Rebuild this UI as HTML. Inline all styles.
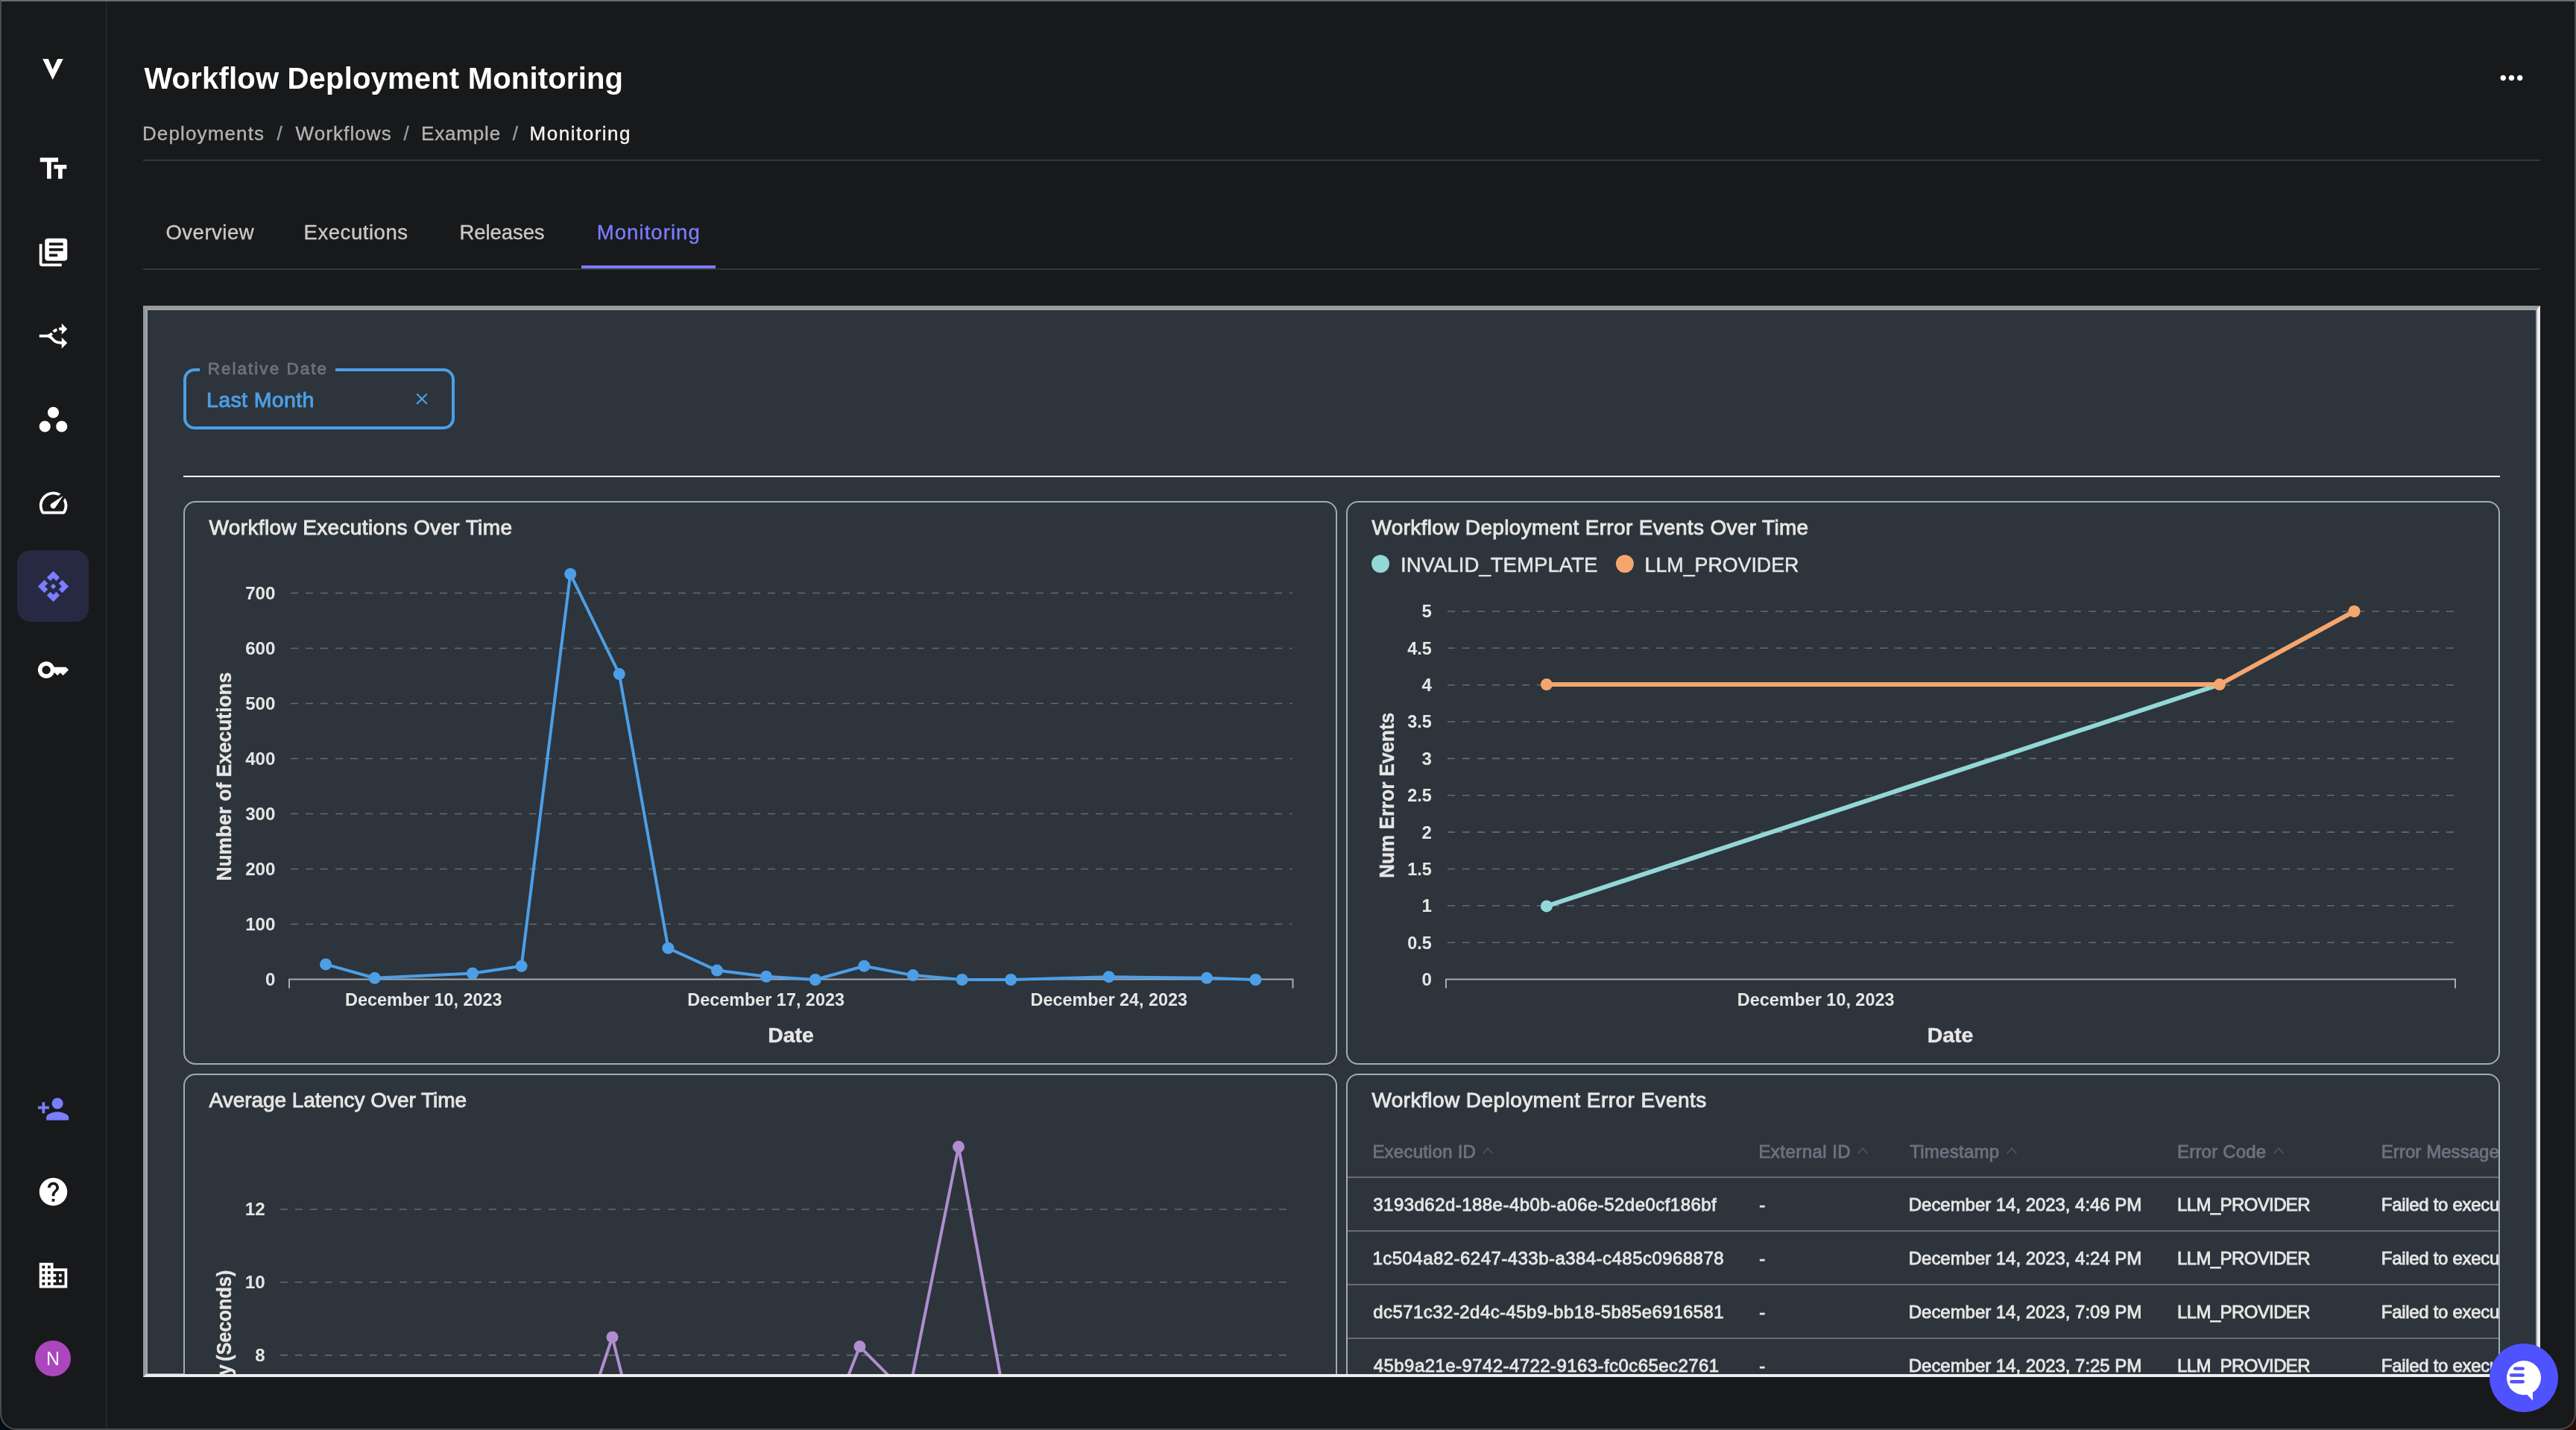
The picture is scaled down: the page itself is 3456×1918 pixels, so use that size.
<!DOCTYPE html><html lang="en"><head><meta charset="utf-8"><title>Workflow Deployment Monitoring</title>
<meta name="viewport" content="width=3456">
<style>
*{box-sizing:border-box;margin:0;padding:0}
html{background:linear-gradient(90deg,#050b14 0%,#050b14 50%,#2a0d0a 100%);}
body{width:3456px;height:1918px;overflow:hidden;position:relative;font-family:"Liberation Sans",sans-serif;color:#fff;}
#win{will-change:transform;position:absolute;left:0;top:0;width:3456px;height:1918px;background:#18191b;border-radius:0 0 22px 22px;overflow:hidden;}
#winb{position:absolute;left:0;top:0;width:3456px;height:1918px;border:2px solid #4a4c4f;border-top:2px solid #5f6d76;border-radius:0 0 22px 22px;pointer-events:none;z-index:50}
#side{position:absolute;left:0;top:0;width:144px;height:1918px;border-right:2px solid #242528;}
#side svg{position:absolute;width:45px;height:45px;left:49px;fill:#fff}
#side .act{position:absolute;left:23px;top:738px;width:96px;height:96px;border-radius:18px;background:#272842}
#side .av{position:absolute;left:47px;top:1798px;width:48px;height:48px;border-radius:50%;background:#ab47bc;color:#fff;font-size:25px;line-height:48px;text-align:center}
main{position:absolute;left:0;top:0;width:3456px;height:1918px}
.hr{position:absolute;left:192px;width:3216px;height:2px;background:#343538}
#frame{position:absolute;left:192px;top:410px;width:3216px;height:1437px;border:4px solid;border-color:#9a9a9a #eeeeee #eeeeee #9a9a9a;background:#2d343b;overflow:hidden}
#dash{position:absolute;left:-196px;top:-414px;width:3456px;height:2600px;}
#dashb{position:absolute;left:196px;top:414px;width:3208px;height:2400px;border:2px solid #97a7b4;border-bottom:none}
.card{position:absolute;border:2px solid #9dadb9;border-radius:16px;background:#2d343b;overflow:hidden}
.card svg{position:absolute;left:0;top:0;font-family:"Liberation Sans",sans-serif}
.m{-webkit-text-stroke:0.85px currentColor}
.tl{position:absolute;height:2px;background:#686c72}
@media (min-width:1700px) and (max-width:1760px){html{zoom:.5}}
</style></head><body>
<div id="win">
<nav id="side">
<svg viewBox="50 70 44 44" style="left:50px;top:70px;width:44px;height:44px"><path d="M57.2 79 L64.8 79 L70.7 93.3 L77.2 79 L84.8 79 L70.7 107 Z"/></svg>
<div class="act"></div>
<svg viewBox="0 0 24 24" style="top:204.0px;left:49.0px;"><path d="M2.5 4v3h5v12h3V7h5V4h-13zm19 5h-9v3h3v7h3v-7h3V9z"/></svg>
<svg viewBox="0 0 24 24" style="top:316.0px;left:49.0px;"><path d="M4 6H2v14c0 1.1.9 2 2 2h14v-2H4V6zm16-4H8c-1.1 0-2 .9-2 2v12c0 1.1.9 2 2 2h12c1.1 0 2-.9 2-2V4c0-1.1-.9-2-2-2zm-1 9H9V9h10v2zm-4 4H9v-2h6v2zm4-8H9V5h10v2z"/></svg>
<svg viewBox="0 0 24 24" style="top:428.0px;left:49.0px;"><g transform="rotate(90 12 12)"><path d="M9.78 11.16l-1.42 1.42c-.68-.69-1.34-1.58-1.79-2.94l1.94-.49c.32.89.77 1.5 1.27 2.01zM11 6L7 2 3 6h3.02c.02.81.08 1.54.19 2.17l1.94-.49C8.08 7.2 8.03 6.63 8.02 6H11zm10 0l-4-4-4 4h2.99c-.1 3.68-1.28 4.75-2.54 5.88-.5.44-1.01.92-1.45 1.55-.34-.49-.73-.88-1.13-1.24L9.46 13.6c.93.85 1.54 1.54 1.54 3.4v5h2v-5c0-2.02.71-2.66 1.79-3.63 1.38-1.24 3.08-2.78 3.2-7.37H21z"/></g></svg>
<svg viewBox="0 0 24 24" style="top:540.0px;left:49.0px;"><path d="M6 13c-2.2 0-4 1.8-4 4s1.8 4 4 4 4-1.8 4-4-1.8-4-4-4zm6-10C9.8 3 8 4.8 8 7s1.8 4 4 4 4-1.8 4-4-1.8-4-4-4zm6 10c-2.2 0-4 1.8-4 4s1.8 4 4 4 4-1.8 4-4-1.8-4-4-4z"/></svg>
<svg viewBox="0 0 24 24" style="top:652.0px;left:49.0px;"><path d="M20.38 8.57l-1.23 1.85a8 8 0 0 1-.22 7.58H5.07A8 8 0 0 1 15.58 6.85l1.85-1.23A10 10 0 0 0 3.35 19a2 2 0 0 0 1.72 1h13.85a2 2 0 0 0 1.74-1 10 10 0 0 0-.27-10.44zm-9.79 6.84a2 2 0 0 0 2.83 0l5.66-8.49-8.49 5.66a2 2 0 0 0 0 2.83z"/></svg>
<svg viewBox="0 0 24 24" style="top:764.0px;left:49.0px;fill:#7a7dff;"><path d="M14 12l-2 2-2-2 2-2 2 2zm-2-6l2.12 2.12 2.5-2.5L12 1 7.38 5.62l2.5 2.5L12 6zm-6 6l2.12-2.12-2.5-2.5L1 12l4.62 4.62 2.5-2.5L6 12zm12 0l-2.12 2.12 2.5 2.5L23 12l-4.62-4.62-2.5 2.5L18 12zm-6 6l-2.12-2.12-2.5 2.5L12 23l4.62-4.62-2.5-2.5L12 18z"/></svg>
<svg viewBox="0 0 24 24" style="top:876.0px;left:49.0px;"><path d="M21 10h-8.35C11.83 7.67 9.61 6 7 6c-3.31 0-6 2.69-6 6s2.69 6 6 6c2.61 0 4.83-1.67 5.65-4H13l2 2 2-2 2 2 4-4.04L21 10zM7 15c-1.65 0-3-1.35-3-3s1.35-3 3-3 3 1.35 3 3-1.35 3-3 3z"/></svg>
<svg viewBox="0 0 24 24" style="top:1465.1px;left:48.6px;fill:#7a7dff;"><path d="M15 12c2.21 0 4-1.79 4-4s-1.79-4-4-4-4 1.79-4 4 1.79 4 4 4zm-9-2V7H4v3H1v2h3v3h2v-3h3v-2H6zm9 4c-2.67 0-8 1.34-8 4v2h16v-2c0-2.66-5.33-4-8-4z"/></svg>
<svg viewBox="0 0 24 24" style="top:1575.9px;left:49.0px;"><path d="M12 2C6.48 2 2 6.48 2 12s4.48 10 10 10 10-4.48 10-10S17.52 2 12 2zm1 17h-2v-2h2v2zm2.07-7.75l-.9.92C13.45 12.9 13 13.5 13 15h-2v-.5c0-1.1.45-2.1 1.17-2.83l1.24-1.26c.37-.36.59-.86.59-1.41 0-1.1-.9-2-2-2s-2 .9-2 2H8c0-2.21 1.79-4 4-4s4 1.79 4 4c0 .88-.36 1.68-.93 2.25z"/></svg>
<svg viewBox="0 0 24 24" style="top:1687.5px;left:49.0px;"><path d="M12 7V3H2v18h20V7H12zM6 19H4v-2h2v2zm0-4H4v-2h2v2zm0-4H4V9h2v2zm0-4H4V5h2v2zm4 12H8v-2h2v2zm0-4H8v-2h2v2zm0-4H8V9h2v2zm0-4H8V5h2v2zm10 12h-8v-2h2v-2h-2v-2h2v-2h-2V9h8v10zm-2-8h-2v2h2v-2zm0 4h-2v2h2v-2z"/></svg>
<div class="av">N</div>
</nav>
<main>
<header>
<h1 style="position:absolute;white-space:nowrap;left:193.4px;top:80.0px;font-size:40px;line-height:50px;color:#fff;font-weight:700;letter-spacing:0.193px;">Workflow Deployment Monitoring</h1>
<div class="crumbs">
<span style="position:absolute;white-space:nowrap;left:190.9px;top:163.0px;font-size:26px;line-height:32px;color:#b3b3b3;letter-spacing:1.138px;-webkit-text-stroke:0.35px currentColor;">Deployments</span>
<span style="position:absolute;white-space:nowrap;left:371.5px;top:163.0px;font-size:26px;line-height:32px;color:#9c9c9c;-webkit-text-stroke:0.35px currentColor;">/</span>
<span style="position:absolute;white-space:nowrap;left:396.5px;top:163.0px;font-size:26px;line-height:32px;color:#b3b3b3;letter-spacing:1.096px;-webkit-text-stroke:0.35px currentColor;">Workflows</span>
<span style="position:absolute;white-space:nowrap;left:541.6px;top:163.0px;font-size:26px;line-height:32px;color:#9c9c9c;-webkit-text-stroke:0.35px currentColor;">/</span>
<span style="position:absolute;white-space:nowrap;left:565.1px;top:163.0px;font-size:26px;line-height:32px;color:#b3b3b3;letter-spacing:0.818px;-webkit-text-stroke:0.35px currentColor;">Example</span>
<span style="position:absolute;white-space:nowrap;left:687.8px;top:163.0px;font-size:26px;line-height:32px;color:#9c9c9c;-webkit-text-stroke:0.35px currentColor;">/</span>
<span style="position:absolute;white-space:nowrap;left:710.5px;top:163.0px;font-size:26px;line-height:32px;color:#f4f4f4;letter-spacing:1.517px;-webkit-text-stroke:0.35px currentColor;">Monitoring</span>
</div>
<svg viewBox="0 0 24 24" style="position:absolute;left:3346.9px;top:82px;width:45px;height:45px;fill:#fff"><path d="M6 10c-1.1 0-2 .9-2 2s.9 2 2 2 2-.9 2-2-.9-2-2-2zm12 0c-1.1 0-2 .9-2 2s.9 2 2 2 2-.9 2-2-.9-2-2-2zm-6 0c-1.1 0-2 .9-2 2s.9 2 2 2 2-.9 2-2-.9-2-2-2z"/></svg>
<div class="hr" style="top:214px"></div>
</header>
<div class="tabs">
<span style="position:absolute;white-space:nowrap;left:222.4px;top:294.6px;font-size:27.5px;line-height:34px;color:#c9c9c9;letter-spacing:0.523px;-webkit-text-stroke:0.35px currentColor;">Overview</span>
<span style="position:absolute;white-space:nowrap;left:407.6px;top:294.6px;font-size:27.5px;line-height:34px;color:#c9c9c9;letter-spacing:0.543px;-webkit-text-stroke:0.35px currentColor;">Executions</span>
<span style="position:absolute;white-space:nowrap;left:616.4px;top:294.6px;font-size:27.5px;line-height:34px;color:#c9c9c9;letter-spacing:-0.059px;-webkit-text-stroke:0.35px currentColor;">Releases</span>
<span style="position:absolute;white-space:nowrap;left:800.8px;top:294.6px;font-size:27.5px;line-height:34px;color:#7a7dff;letter-spacing:1.062px;-webkit-text-stroke:0.35px currentColor;">Monitoring</span>
<div style="position:absolute;left:780px;top:356px;width:180px;height:4px;background:#7a7dff"></div>
<div class="hr" style="top:360px"></div>
</div>
<div id="frame"><div id="dash"><div id="dashb"></div>
<div class="filter" style="position:absolute;left:246px;top:494px;width:364px;height:82px;border:4px solid #4c9fe6;border-radius:15px"></div>
<div style="position:absolute;left:268px;top:490px;width:182px;height:12px;background:#2d343b"></div>
<span class="m" style="position:absolute;white-space:nowrap;left:278.7px;top:481.2px;font-size:22.5px;line-height:28px;color:#6c7181;letter-spacing:2.026px;">Relative Date</span>
<span style="position:absolute;white-space:nowrap;left:277.0px;top:517.6px;font-size:28.5px;line-height:36px;color:#4c9fe6;letter-spacing:0.378px;-webkit-text-stroke:0.9px #4c9fe6;">Last Month</span>
<svg viewBox="0 0 16 16" style="position:absolute;left:558px;top:527px;width:16px;height:16px"><path d="M1.2 1.2 L14.8 14.8 M14.8 1.2 L1.2 14.8" stroke="#4c9fe6" stroke-width="2.3" fill="none"/></svg>
<div style="position:absolute;left:246px;top:638px;width:3108px;height:2px;background:#fdfdfd"></div>
<div style="position:absolute;left:198px;top:1841.5px;width:48px;height:1.5px;background:#8595a3"></div>
<section class="card" style="left:246px;top:672px;width:1548px;height:756px">
<svg width="1544" height="752" viewBox="248 674 1544 752">
<line x1="390.0" y1="1239.5" x2="1733.5" y2="1239.5" stroke="#666a70" stroke-width="1.6" stroke-dasharray="10 10"/>
<line x1="390.0" y1="1165.5" x2="1733.5" y2="1165.5" stroke="#666a70" stroke-width="1.6" stroke-dasharray="10 10"/>
<line x1="390.0" y1="1091.5" x2="1733.5" y2="1091.5" stroke="#666a70" stroke-width="1.6" stroke-dasharray="10 10"/>
<line x1="390.0" y1="1017.5" x2="1733.5" y2="1017.5" stroke="#666a70" stroke-width="1.6" stroke-dasharray="10 10"/>
<line x1="390.0" y1="943.5" x2="1733.5" y2="943.5" stroke="#666a70" stroke-width="1.6" stroke-dasharray="10 10"/>
<line x1="390.0" y1="869.5" x2="1733.5" y2="869.5" stroke="#666a70" stroke-width="1.6" stroke-dasharray="10 10"/>
<line x1="390.0" y1="795.5" x2="1733.5" y2="795.5" stroke="#666a70" stroke-width="1.6" stroke-dasharray="10 10"/>
<text x="369.5" y="1321.9" font-size="23.5" fill="#e6e6e6" font-weight="700" text-anchor="end" textLength="13.4" lengthAdjust="spacingAndGlyphs">0</text>
<text x="369.5" y="1247.9" font-size="23.5" fill="#e6e6e6" font-weight="700" text-anchor="end" textLength="40.3" lengthAdjust="spacingAndGlyphs">100</text>
<text x="369.5" y="1173.9" font-size="23.5" fill="#e6e6e6" font-weight="700" text-anchor="end" textLength="40.3" lengthAdjust="spacingAndGlyphs">200</text>
<text x="369.5" y="1099.9" font-size="23.5" fill="#e6e6e6" font-weight="700" text-anchor="end" textLength="40.3" lengthAdjust="spacingAndGlyphs">300</text>
<text x="369.5" y="1025.9" font-size="23.5" fill="#e6e6e6" font-weight="700" text-anchor="end" textLength="40.3" lengthAdjust="spacingAndGlyphs">400</text>
<text x="369.5" y="951.9" font-size="23.5" fill="#e6e6e6" font-weight="700" text-anchor="end" textLength="40.3" lengthAdjust="spacingAndGlyphs">500</text>
<text x="369.5" y="877.9" font-size="23.5" fill="#e6e6e6" font-weight="700" text-anchor="end" textLength="40.3" lengthAdjust="spacingAndGlyphs">600</text>
<text x="369.5" y="803.9" font-size="23.5" fill="#e6e6e6" font-weight="700" text-anchor="end" textLength="40.3" lengthAdjust="spacingAndGlyphs">700</text>
<path d="M388.0 1325.5 V1313.5 H1734.5 V1325.5" fill="none" stroke="#a3abb3" stroke-width="2"/>
<path d="M437.1 1293.4 L502.7 1311.8 L633.9 1305.5 L699.6 1295.8 L765.2 769.9 L830.8 904.1 L896.4 1271.7 L962.0 1301.6 L1028.0 1309.8 L1093.8 1314.0 L1159.3 1295.7 L1224.8 1308.1 L1290.7 1314.0 L1356.2 1314.0 L1487.6 1310.2 L1619.0 1311.8 L1684.5 1314.0" fill="none" stroke="#4c9fe6" stroke-width="4" stroke-linejoin="round" stroke-linecap="round"/><circle cx="437.1" cy="1293.4" r="8" fill="#4c9fe6"/><circle cx="502.7" cy="1311.8" r="8" fill="#4c9fe6"/><circle cx="633.9" cy="1305.5" r="8" fill="#4c9fe6"/><circle cx="699.6" cy="1295.8" r="8" fill="#4c9fe6"/><circle cx="765.2" cy="769.9" r="8" fill="#4c9fe6"/><circle cx="830.8" cy="904.1" r="8" fill="#4c9fe6"/><circle cx="896.4" cy="1271.7" r="8" fill="#4c9fe6"/><circle cx="962.0" cy="1301.6" r="8" fill="#4c9fe6"/><circle cx="1028.0" cy="1309.8" r="8" fill="#4c9fe6"/><circle cx="1093.8" cy="1314.0" r="8" fill="#4c9fe6"/><circle cx="1159.3" cy="1295.7" r="8" fill="#4c9fe6"/><circle cx="1224.8" cy="1308.1" r="8" fill="#4c9fe6"/><circle cx="1290.7" cy="1314.0" r="8" fill="#4c9fe6"/><circle cx="1356.2" cy="1314.0" r="8" fill="#4c9fe6"/><circle cx="1487.6" cy="1310.2" r="8" fill="#4c9fe6"/><circle cx="1619.0" cy="1311.8" r="8" fill="#4c9fe6"/><circle cx="1684.5" cy="1314.0" r="8" fill="#4c9fe6"/>
<text x="568.3" y="1349.0" font-size="24" fill="#e6e6e6" font-weight="700" text-anchor="middle" textLength="210.6" lengthAdjust="spacingAndGlyphs">December 10, 2023</text>
<text x="1027.6" y="1349.0" font-size="24" fill="#e6e6e6" font-weight="700" text-anchor="middle" textLength="210.6" lengthAdjust="spacingAndGlyphs">December 17, 2023</text>
<text x="1487.8" y="1349.0" font-size="24" fill="#e6e6e6" font-weight="700" text-anchor="middle" textLength="210.6" lengthAdjust="spacingAndGlyphs">December 24, 2023</text>
<text x="1061.0" y="1397.8" font-size="28" fill="#e6e6e6" font-weight="700" text-anchor="middle" textLength="61.6" lengthAdjust="spacingAndGlyphs" stroke="#e6e6e6" stroke-width="0.4">Date</text>
<text transform="translate(310.3 1041.6) rotate(-90)" x="0" y="0" text-anchor="middle" font-size="28" font-weight="700" fill="#e6e6e6" stroke="#e6e6e6" stroke-width="0.35" textLength="280.0" lengthAdjust="spacingAndGlyphs">Number of Executions</text>
</svg>
<h2 style="position:absolute;white-space:nowrap;left:32.5px;top:16.4px;font-size:28px;line-height:35px;color:#e6e6e6;letter-spacing:0.364px;font-weight:400;-webkit-text-stroke:0.9px currentColor;">Workflow Executions Over Time</h2>
</section>
<section class="card" style="left:1806px;top:672px;width:1548px;height:756px">
<svg width="1544" height="752" viewBox="1808 674 1544 752">
<line x1="1942.0" y1="1264.2" x2="3293.0" y2="1264.2" stroke="#666a70" stroke-width="1.6" stroke-dasharray="10 10"/>
<line x1="1942.0" y1="1214.8" x2="3293.0" y2="1214.8" stroke="#666a70" stroke-width="1.6" stroke-dasharray="10 10"/>
<line x1="1942.0" y1="1165.5" x2="3293.0" y2="1165.5" stroke="#666a70" stroke-width="1.6" stroke-dasharray="10 10"/>
<line x1="1942.0" y1="1116.1" x2="3293.0" y2="1116.1" stroke="#666a70" stroke-width="1.6" stroke-dasharray="10 10"/>
<line x1="1942.0" y1="1066.8" x2="3293.0" y2="1066.8" stroke="#666a70" stroke-width="1.6" stroke-dasharray="10 10"/>
<line x1="1942.0" y1="1017.4" x2="3293.0" y2="1017.4" stroke="#666a70" stroke-width="1.6" stroke-dasharray="10 10"/>
<line x1="1942.0" y1="968.0" x2="3293.0" y2="968.0" stroke="#666a70" stroke-width="1.6" stroke-dasharray="10 10"/>
<line x1="1942.0" y1="918.7" x2="3293.0" y2="918.7" stroke="#666a70" stroke-width="1.6" stroke-dasharray="10 10"/>
<line x1="1942.0" y1="869.3" x2="3293.0" y2="869.3" stroke="#666a70" stroke-width="1.6" stroke-dasharray="10 10"/>
<line x1="1942.0" y1="820.0" x2="3293.0" y2="820.0" stroke="#666a70" stroke-width="1.6" stroke-dasharray="10 10"/>
<text x="1920.8" y="1321.9" font-size="23.5" fill="#e6e6e6" font-weight="700" text-anchor="end" textLength="13.4" lengthAdjust="spacingAndGlyphs">0</text>
<text x="1920.8" y="1272.6" font-size="23.5" fill="#e6e6e6" font-weight="700" text-anchor="end" textLength="32.5" lengthAdjust="spacingAndGlyphs">0.5</text>
<text x="1920.8" y="1223.2" font-size="23.5" fill="#e6e6e6" font-weight="700" text-anchor="end" textLength="13.4" lengthAdjust="spacingAndGlyphs">1</text>
<text x="1920.8" y="1173.9" font-size="23.5" fill="#e6e6e6" font-weight="700" text-anchor="end" textLength="32.5" lengthAdjust="spacingAndGlyphs">1.5</text>
<text x="1920.8" y="1124.5" font-size="23.5" fill="#e6e6e6" font-weight="700" text-anchor="end" textLength="13.4" lengthAdjust="spacingAndGlyphs">2</text>
<text x="1920.8" y="1075.2" font-size="23.5" fill="#e6e6e6" font-weight="700" text-anchor="end" textLength="32.5" lengthAdjust="spacingAndGlyphs">2.5</text>
<text x="1920.8" y="1025.8" font-size="23.5" fill="#e6e6e6" font-weight="700" text-anchor="end" textLength="13.4" lengthAdjust="spacingAndGlyphs">3</text>
<text x="1920.8" y="976.4" font-size="23.5" fill="#e6e6e6" font-weight="700" text-anchor="end" textLength="32.5" lengthAdjust="spacingAndGlyphs">3.5</text>
<text x="1920.8" y="927.1" font-size="23.5" fill="#e6e6e6" font-weight="700" text-anchor="end" textLength="13.4" lengthAdjust="spacingAndGlyphs">4</text>
<text x="1920.8" y="877.7" font-size="23.5" fill="#e6e6e6" font-weight="700" text-anchor="end" textLength="32.5" lengthAdjust="spacingAndGlyphs">4.5</text>
<text x="1920.8" y="828.4" font-size="23.5" fill="#e6e6e6" font-weight="700" text-anchor="end" textLength="13.4" lengthAdjust="spacingAndGlyphs">5</text>
<path d="M1940.0 1325.5 V1313.5 H3294.0 V1325.5" fill="none" stroke="#a3abb3" stroke-width="2"/>
<path d="M2074.9 1215.4 L2977.8 918.1" fill="none" stroke="#93d7d8" stroke-width="6" stroke-linejoin="round" stroke-linecap="round"/><circle cx="2074.9" cy="1215.4" r="8" fill="#93d7d8"/>
<path d="M2074.9 918.1 L2977.8 918.1 L3158.5 820.0" fill="none" stroke="#f4a66e" stroke-width="6" stroke-linejoin="round" stroke-linecap="round"/><circle cx="2074.9" cy="918.1" r="8" fill="#f4a66e"/><circle cx="2977.8" cy="918.1" r="8" fill="#f4a66e"/><circle cx="3158.5" cy="820.0" r="8" fill="#f4a66e"/>
<text x="2436.1" y="1349.0" font-size="24" fill="#e6e6e6" font-weight="700" text-anchor="middle" textLength="210.6" lengthAdjust="spacingAndGlyphs">December 10, 2023</text>
<text x="2616.6" y="1397.8" font-size="28" fill="#e6e6e6" font-weight="700" text-anchor="middle" textLength="61.6" lengthAdjust="spacingAndGlyphs" stroke="#e6e6e6" stroke-width="0.4">Date</text>
<text transform="translate(1870.3 1066.8) rotate(-90)" x="0" y="0" text-anchor="middle" font-size="28" font-weight="700" fill="#e6e6e6" stroke="#e6e6e6" stroke-width="0.35" textLength="222.0" lengthAdjust="spacingAndGlyphs">Num Error Events</text>
<circle cx="1852" cy="756.3" r="12" fill="#93d7d8"/>
<text x="1879.0" y="767.2" font-size="28.5" fill="#e6e6e6" textLength="264.5" lengthAdjust="spacingAndGlyphs" stroke="#e6e6e6" stroke-width="0.5">INVALID_TEMPLATE</text>
<circle cx="2179.9" cy="756.3" r="12" fill="#f4a66e"/>
<text x="2206.6" y="767.2" font-size="28.5" fill="#e6e6e6" textLength="206.8" lengthAdjust="spacingAndGlyphs" stroke="#e6e6e6" stroke-width="0.5">LLM_PROVIDER</text>
</svg>
<h2 style="position:absolute;white-space:nowrap;left:32.5px;top:16.4px;font-size:28px;line-height:35px;color:#e6e6e6;letter-spacing:0.331px;font-weight:400;-webkit-text-stroke:0.9px currentColor;">Workflow Deployment Error Events Over Time</h2>
</section>
<section class="card" style="left:246px;top:1440px;width:1548px;height:900px">
<svg width="1544" height="896" viewBox="248 1442 1544 896">
<line x1="375.8" y1="2208.8" x2="1725.8" y2="2208.8" stroke="#666a70" stroke-width="1.6" stroke-dasharray="10 10"/>
<text x="355.6" y="2217.2" font-size="23.5" fill="#e6e6e6" font-weight="700" text-anchor="end" textLength="13.4" lengthAdjust="spacingAndGlyphs">0</text>
<line x1="375.8" y1="2111.0" x2="1725.8" y2="2111.0" stroke="#666a70" stroke-width="1.6" stroke-dasharray="10 10"/>
<text x="355.6" y="2119.4" font-size="23.5" fill="#e6e6e6" font-weight="700" text-anchor="end" textLength="13.4" lengthAdjust="spacingAndGlyphs">2</text>
<line x1="375.8" y1="2013.2" x2="1725.8" y2="2013.2" stroke="#666a70" stroke-width="1.6" stroke-dasharray="10 10"/>
<text x="355.6" y="2021.6" font-size="23.5" fill="#e6e6e6" font-weight="700" text-anchor="end" textLength="13.4" lengthAdjust="spacingAndGlyphs">4</text>
<line x1="375.8" y1="1915.4" x2="1725.8" y2="1915.4" stroke="#666a70" stroke-width="1.6" stroke-dasharray="10 10"/>
<text x="355.6" y="1923.8" font-size="23.5" fill="#e6e6e6" font-weight="700" text-anchor="end" textLength="13.4" lengthAdjust="spacingAndGlyphs">6</text>
<line x1="375.8" y1="1817.6" x2="1725.8" y2="1817.6" stroke="#666a70" stroke-width="1.6" stroke-dasharray="10 10"/>
<text x="355.6" y="1826.0" font-size="23.5" fill="#e6e6e6" font-weight="700" text-anchor="end" textLength="13.4" lengthAdjust="spacingAndGlyphs">8</text>
<line x1="375.8" y1="1719.8" x2="1725.8" y2="1719.8" stroke="#666a70" stroke-width="1.6" stroke-dasharray="10 10"/>
<text x="355.6" y="1728.2" font-size="23.5" fill="#e6e6e6" font-weight="700" text-anchor="end" textLength="26.9" lengthAdjust="spacingAndGlyphs">10</text>
<line x1="375.8" y1="1622.0" x2="1725.8" y2="1622.0" stroke="#666a70" stroke-width="1.6" stroke-dasharray="10 10"/>
<text x="355.6" y="1630.4" font-size="23.5" fill="#e6e6e6" font-weight="700" text-anchor="end" textLength="26.9" lengthAdjust="spacingAndGlyphs">12</text>
<path d="M690.3 2100.0 L755.9 1990.6 L821.5 1793.4 L887.1 2055.8 L1022.0 2080.0 L1087.8 1974.0 L1153.4 1806.1 L1219.0 1872.0 L1286.0 1538.1 L1351.6 1897.5 L1417.0 2100.0" fill="none" stroke="#b08dd0" stroke-width="4" stroke-linejoin="round" stroke-linecap="round"/><circle cx="821.5" cy="1793.4" r="8" fill="#b08dd0"/><circle cx="1153.4" cy="1806.1" r="8" fill="#b08dd0"/><circle cx="1286.0" cy="1538.1" r="8" fill="#b08dd0"/>
<text transform="translate(310.3 1703.6) rotate(-90)" x="0" y="0" text-anchor="end" font-size="28" font-weight="700" fill="#e6e6e6" stroke="#e6e6e6" stroke-width="0.35" textLength="122.2" lengthAdjust="spacingAndGlyphs">(Seconds)</text>
<text transform="translate(310.3 1830.2) rotate(-90)" x="0" y="0" text-anchor="end" font-size="28" font-weight="700" fill="#e6e6e6" stroke="#e6e6e6" stroke-width="0.35" textLength="208.0" lengthAdjust="spacingAndGlyphs">Average Latency</text>
</svg>
<h2 style="position:absolute;white-space:nowrap;left:32.6px;top:16.4px;font-size:28px;line-height:35px;color:#e6e6e6;letter-spacing:-0.047px;font-weight:400;-webkit-text-stroke:0.9px currentColor;">Average Latency Over Time</h2>
</section>
<section class="card" style="left:1806px;top:1440px;width:1548px;height:900px">
<h2 style="position:absolute;white-space:nowrap;left:32.5px;top:16.4px;font-size:28px;line-height:35px;color:#e6e6e6;letter-spacing:0.435px;font-weight:400;-webkit-text-stroke:0.9px currentColor;">Workflow Deployment Error Events</h2>
<div class="thead">
<span class="m" style="position:absolute;white-space:nowrap;left:33.4px;top:87.7px;font-size:24px;line-height:30px;color:#6b7281;letter-spacing:0.222px;">Execution ID</span>
<svg viewBox="0 0 14 9" style="position:absolute;left:181.2px;top:97.0px;width:14px;height:9px"><path d="M0.7 8.3 L7 1.2 L13.3 8.3" fill="none" stroke="#4f5661" stroke-width="1.6"/></svg>
<span class="m" style="position:absolute;white-space:nowrap;left:551.4px;top:87.7px;font-size:24px;line-height:30px;color:#6b7281;letter-spacing:0.452px;">External ID</span>
<svg viewBox="0 0 14 9" style="position:absolute;left:684.0px;top:97.0px;width:14px;height:9px"><path d="M0.7 8.3 L7 1.2 L13.3 8.3" fill="none" stroke="#4f5661" stroke-width="1.6"/></svg>
<span class="m" style="position:absolute;white-space:nowrap;left:754.2px;top:87.7px;font-size:24px;line-height:30px;color:#6b7281;letter-spacing:0.277px;">Timestamp</span>
<svg viewBox="0 0 14 9" style="position:absolute;left:883.7px;top:97.0px;width:14px;height:9px"><path d="M0.7 8.3 L7 1.2 L13.3 8.3" fill="none" stroke="#4f5661" stroke-width="1.6"/></svg>
<span class="m" style="position:absolute;white-space:nowrap;left:1113.0px;top:87.7px;font-size:24px;line-height:30px;color:#6b7281;letter-spacing:0.204px;">Error Code</span>
<svg viewBox="0 0 14 9" style="position:absolute;left:1241.6px;top:97.0px;width:14px;height:9px"><path d="M0.7 8.3 L7 1.2 L13.3 8.3" fill="none" stroke="#4f5661" stroke-width="1.6"/></svg>
<span class="m" style="position:absolute;white-space:nowrap;left:1386.8px;top:87.7px;font-size:24px;line-height:30px;color:#6b7281;letter-spacing:0.057px;">Error Message</span>
</div>
<div class="tl" style="left:0;top:136px;width:1548px"></div>
<div class="tr">
<span class="m" style="position:absolute;white-space:nowrap;left:34.3px;top:158.8px;font-size:24px;line-height:30px;color:#e6e6e6;letter-spacing:0.459px;">3193d62d-188e-4b0b-a06e-52de0cf186bf</span>
<span class="m" style="position:absolute;white-space:nowrap;left:552.2px;top:158.8px;font-size:24px;line-height:30px;color:#e6e6e6;">-</span>
<span class="m" style="position:absolute;white-space:nowrap;left:752.8px;top:158.8px;font-size:24px;line-height:30px;color:#e6e6e6;letter-spacing:-0.044px;">December 14, 2023, 4:46 PM</span>
<span class="m" style="position:absolute;white-space:nowrap;left:1113.0px;top:158.8px;font-size:24px;line-height:30px;color:#e6e6e6;letter-spacing:-0.618px;">LLM_PROVIDER</span>
<span class="m" style="position:absolute;white-space:nowrap;left:1386.8px;top:158.8px;font-size:24px;line-height:30px;color:#e6e6e6;letter-spacing:-0.3px;">Failed to execute Prompt</span>
</div>
<div class="tl" style="left:0;top:208px;width:1548px"></div>
<div class="tr">
<span class="m" style="position:absolute;white-space:nowrap;left:33.5px;top:230.8px;font-size:24px;line-height:30px;color:#e6e6e6;letter-spacing:0.458px;">1c504a82-6247-433b-a384-c485c0968878</span>
<span class="m" style="position:absolute;white-space:nowrap;left:552.2px;top:230.8px;font-size:24px;line-height:30px;color:#e6e6e6;">-</span>
<span class="m" style="position:absolute;white-space:nowrap;left:752.8px;top:230.8px;font-size:24px;line-height:30px;color:#e6e6e6;letter-spacing:-0.044px;">December 14, 2023, 4:24 PM</span>
<span class="m" style="position:absolute;white-space:nowrap;left:1113.0px;top:230.8px;font-size:24px;line-height:30px;color:#e6e6e6;letter-spacing:-0.618px;">LLM_PROVIDER</span>
<span class="m" style="position:absolute;white-space:nowrap;left:1386.8px;top:230.8px;font-size:24px;line-height:30px;color:#e6e6e6;letter-spacing:-0.3px;">Failed to execute Prompt</span>
</div>
<div class="tl" style="left:0;top:280px;width:1548px"></div>
<div class="tr">
<span class="m" style="position:absolute;white-space:nowrap;left:34.3px;top:302.8px;font-size:24px;line-height:30px;color:#e6e6e6;letter-spacing:0.437px;">dc571c32-2d4c-45b9-bb18-5b85e6916581</span>
<span class="m" style="position:absolute;white-space:nowrap;left:552.2px;top:302.8px;font-size:24px;line-height:30px;color:#e6e6e6;">-</span>
<span class="m" style="position:absolute;white-space:nowrap;left:752.8px;top:302.8px;font-size:24px;line-height:30px;color:#e6e6e6;letter-spacing:-0.044px;">December 14, 2023, 7:09 PM</span>
<span class="m" style="position:absolute;white-space:nowrap;left:1113.0px;top:302.8px;font-size:24px;line-height:30px;color:#e6e6e6;letter-spacing:-0.618px;">LLM_PROVIDER</span>
<span class="m" style="position:absolute;white-space:nowrap;left:1386.8px;top:302.8px;font-size:24px;line-height:30px;color:#e6e6e6;letter-spacing:-0.3px;">Failed to execute Prompt</span>
</div>
<div class="tl" style="left:0;top:352px;width:1548px"></div>
<div class="tr">
<span class="m" style="position:absolute;white-space:nowrap;left:34.8px;top:374.8px;font-size:24px;line-height:30px;color:#e6e6e6;letter-spacing:0.427px;">45b9a21e-9742-4722-9163-fc0c65ec2761</span>
<span class="m" style="position:absolute;white-space:nowrap;left:552.2px;top:374.8px;font-size:24px;line-height:30px;color:#e6e6e6;">-</span>
<span class="m" style="position:absolute;white-space:nowrap;left:752.8px;top:374.8px;font-size:24px;line-height:30px;color:#e6e6e6;letter-spacing:-0.044px;">December 14, 2023, 7:25 PM</span>
<span class="m" style="position:absolute;white-space:nowrap;left:1113.0px;top:374.8px;font-size:24px;line-height:30px;color:#e6e6e6;letter-spacing:-0.618px;">LLM_PROVIDER</span>
<span class="m" style="position:absolute;white-space:nowrap;left:1386.8px;top:374.8px;font-size:24px;line-height:30px;color:#e6e6e6;letter-spacing:-0.3px;">Failed to execute Prompt</span>
</div>
</section>
</div></div>
</main>
<div id="chat" style="position:absolute;left:3340px;top:1802px;width:92px;height:92px;border-radius:50%;background:#4f52ff;z-index:40">
<svg viewBox="3340 1802 92 92" width="92" height="92" style="position:absolute;left:0;top:0">
<path d="M3386 1825 a23 23 0 1 1 -1.5 46 c3 0 6 -0.3 8 -1 l5.5 8.5 l-0.3 -11.5 a23 23 0 0 0 -11.7 -42 z" fill="#fff"/>
<circle cx="3386" cy="1848" r="23" fill="#fff"/>
<path d="M3388 1868 L3398 1878.5 L3397.5 1862 Z" fill="#fff"/>
<g stroke="#4f52ff" stroke-width="4.4" stroke-linecap="round"><path d="M3374.3 1835.6 H3384.7"/><path d="M3369 1844.5 H3384.7"/><path d="M3369.5 1853.3 H3384.7"/></g>
</svg></div>
</div><div id="winb"></div>
</body></html>
